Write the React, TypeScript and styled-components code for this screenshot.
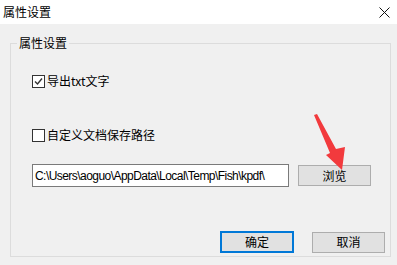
import React from 'react';
import styled, { createGlobalStyle, css } from 'styled-components';

const GlobalStyle = createGlobalStyle`
  html, body {
    margin: 0;
    padding: 0;
    background: #f0f0f0;
  }
  body {
    font-family: "Noto Sans CJK SC", "Liberation Sans", sans-serif;
    font-size: 12px;
    color: #000;
  }
`;

const Window = styled.div`
  position: relative;
  width: 397px;
  height: 265px;
  display: flex;
  flex-direction: column;
  background: #f0f0f0;
  overflow: hidden;
`;

const TitleBar = styled.div`
  height: 24px;
  flex: none;
  display: flex;
  align-items: center;
  justify-content: space-between;
  padding: 0 6px 0 3px;
  background: #fff;
  font-size: 12px;
  line-height: 16px;
`;

const CloseIcon = styled.svg`
  width: 11px;
  height: 11px;
  margin-right: 1px;
`;

const GroupBox = styled.fieldset`
  margin: 11px 6px 8px 10px;
  padding: 0 5px 0 21px;
  border: 1px solid #dcdcdc;
  flex: 1;
  min-width: 0;
  display: flex;
  flex-direction: column;
`;

const Legend = styled.legend`
  margin-left: -15px;
  padding: 0 2px;
  font-size: 12px;
  line-height: 16px;
`;

const CheckRow = styled.label<{ $top: number }>`
  display: flex;
  align-items: center;
  gap: 2px;
  height: 16px;
  margin-top: ${({ $top }) => $top}px;
  line-height: 16px;
`;

const Box = styled.span`
  width: 11px;
  height: 11px;
  border: 1px solid #333;
  background: #fff;
  display: flex;
  align-items: center;
  justify-content: center;
`;

const PathRow = styled.div`
  display: flex;
  align-items: center;
  gap: 9px;
  margin-top: 21px;
`;

const PathInput = styled.div`
  box-sizing: border-box;
  width: 257px;
  height: 23px;
  border: 1px solid #7a7a7a;
  background: #fff;
  padding-left: 2px;
  display: flex;
  align-items: center;
  font-family: "Liberation Sans", sans-serif;
  font-size: 12px;
  letter-spacing: -0.55px;
  white-space: nowrap;
  overflow: hidden;
`;

const Button = styled.button<{ $default?: boolean }>`
  box-sizing: border-box;
  width: 73px;
  height: 21px;
  padding: 0;
  border: 1px solid #adadad;
  background: #e1e1e1;
  font-family: "Noto Sans CJK SC", sans-serif;
  font-size: 12px;
  line-height: 16px;
  color: #000;
  ${({ $default }) =>
    $default &&
    css`
      width: 74px;
      height: 22px;
      border: 2px solid #0078d7;
    `}
`;

const ButtonRow = styled.div`
  display: flex;
  justify-content: flex-end;
  align-items: center;
  gap: 18px;
  margin-top: 44px;
`;

const Arrow = styled.svg`
  position: absolute;
  left: 300px;
  top: 105px;
  width: 60px;
  height: 75px;
  pointer-events: none;
`;

export default function App(): React.ReactElement {
  return (
    <>
      <GlobalStyle />
      <Window>
        <TitleBar>
          <span>属性设置</span>
          <CloseIcon viewBox="0 0 11 11">
            <path d="M0.5 0.5 L10.5 10.5 M10.5 0.5 L0.5 10.5" stroke="#111" strokeWidth="1" fill="none" />
          </CloseIcon>
        </TitleBar>
        <GroupBox>
          <Legend>属性设置</Legend>
          <CheckRow $top={22}>
            <Box>
              <svg width="9" height="9" viewBox="0 0 9 9">
                <path d="M1 4.5 L3.5 7 L8 1.5" stroke="#333" strokeWidth="1.4" fill="none" />
              </svg>
            </Box>
            <span>导出txt文字</span>
          </CheckRow>
          <CheckRow $top={38}>
            <Box />
            <span>自定义文档保存路径</span>
          </CheckRow>
          <PathRow>
            <PathInput>C:\Users\aoguo\AppData\Local\Temp\Fish\kpdf\</PathInput>
            <Button>浏览</Button>
          </PathRow>
          <ButtonRow>
            <Button $default>确定</Button>
            <Button>取消</Button>
          </ButtonRow>
        </GroupBox>
        <Arrow viewBox="300 105 60 75">
          <polygon
            points="314,115 317,114 336,149 345,147 342,170 326,155 330,153"
            fill="#f23a3d"
          />
        </Arrow>
      </Window>
    </>
  );
}
